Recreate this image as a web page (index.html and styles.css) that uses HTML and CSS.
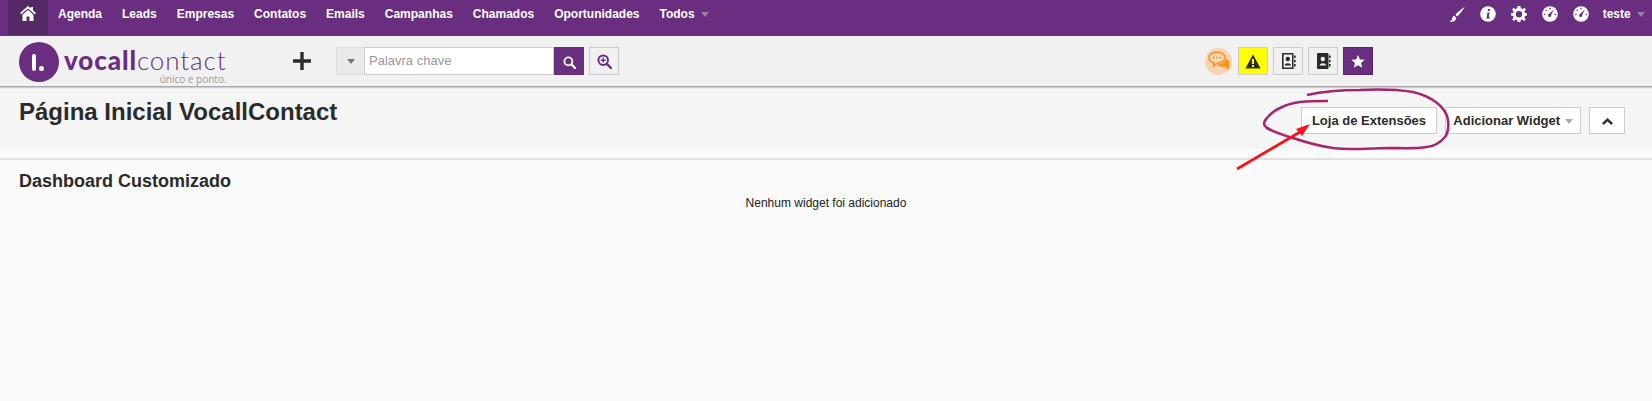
FILE: index.html
```html
<!DOCTYPE html>
<html lang="en">
<head>
  <meta charset="UTF-8" />
  <title>Página Inicial VocallContact</title>
  <link rel="stylesheet" href="styles.css">
</head>
<body>
  <div class="topbar">
    <a class="home-tab">
      <svg width="16" height="15" viewBox="0 0 16 15"><path d="M8 0 L11 2.6 V1 H13 V4.4 L16 7 L14.8 8.2 L8 2.4 L1.2 8.2 L0 7 Z" fill="#fff"/><path d="M8 4 L13.5 8.7 V15 H9.5 V10.5 H6.5 V15 H2.5 V8.7 Z" fill="#fff"/></svg>
    </a>
    <ul class="main-nav">
      <li>Agenda</li>
      <li>Leads</li>
      <li>Empresas</li>
      <li>Contatos</li>
      <li>Emails</li>
      <li>Campanhas</li>
      <li>Chamados</li>
      <li>Oportunidades</li>
      <li>Todos <span class="caret"></span></li>
    </ul>
    <div class="top-tools">
      <svg class="tool" width="16" height="17" viewBox="0 0 17 17"><path d="M16.5 0.5 C13 2.5 9 6 6.8 9 L8.5 10.6 C11.5 8 15 4 16.5 0.5 Z" fill="#fff"/><path d="M5.8 10 C3.5 10 3.6 12.5 3 14 C2.6 15 1.5 15.5 0.5 15.6 C3 17 7.5 16.5 7.6 12 Z" fill="#fff"/></svg>
      <svg class="tool" width="16" height="16" viewBox="0 0 16 16"><circle cx="8" cy="8" r="7.8" fill="#fff"/><path d="M8 3 H10.2 L9.8 5 H7.6 Z M7.3 6.4 H9.6 L8.8 10.8 L9.8 10.8 L9.5 12.4 H6.3 L6.6 10.8 H7 Z" fill="#692e80"/></svg>
      <svg class="tool" width="16" height="16" viewBox="0 0 16 16"><path d="M6.6 0 H9.4 L9.8 2.2 L11.6 3 L13.5 1.8 L15 3.7 L13.4 5.3 L14 7 L16 7.2 V9.6 L14 9.9 L13.4 11.5 L14.8 13.2 L13 15 L11.3 13.5 L9.7 14.1 L9.4 16 H6.6 L6.3 14.1 L4.7 13.5 L3 15 L1.2 13.2 L2.6 11.5 L2 9.9 L0 9.6 V7.2 L2 7 L2.6 5.3 L1 3.7 L2.5 1.8 L4.4 3 L6.2 2.2 Z M8 5 A3.2 3.2 0 1 0 8 11.4 A3.2 3.2 0 1 0 8 5 Z" fill="#fff" fill-rule="evenodd"/></svg>
      <svg class="tool" width="16" height="16" viewBox="0 0 16 16"><circle cx="8" cy="8" r="7.8" fill="#fff"/><path d="M11.8 3.6 L9.2 9 A1.6 1.6 0 1 1 7 8 Z" fill="#692e80"/><circle cx="2.8" cy="8.5" r="0.8" fill="#692e80"/><circle cx="4.2" cy="4.2" r="0.8" fill="#692e80"/><circle cx="8" cy="2.6" r="0.8" fill="#692e80"/><circle cx="13.2" cy="8.5" r="0.8" fill="#692e80"/></svg>
      <svg class="tool last" width="16" height="16" viewBox="0 0 16 16"><circle cx="8" cy="8" r="7.8" fill="#fff"/><path d="M11.8 3.6 L9.2 9 A1.6 1.6 0 1 1 7 8 Z" fill="#692e80"/><circle cx="2.8" cy="8.5" r="0.8" fill="#692e80"/><circle cx="4.2" cy="4.2" r="0.8" fill="#692e80"/><circle cx="8" cy="2.6" r="0.8" fill="#692e80"/><circle cx="13.2" cy="8.5" r="0.8" fill="#692e80"/></svg>
      <span class="user">teste <span class="caret"></span></span>
    </div>
  </div>

  <div class="subbar">
    <div class="logo">
      <div class="logo-mark"><span class="logo-i"></span><span class="logo-dot"></span></div>
      <div class="logo-text">
        <div class="logo-name"><b>vocall</b>contact</div>
        <div class="logo-tag">único e ponto.</div>
      </div>
    </div>
    <svg class="plus" width="20" height="20" viewBox="0 0 20 20"><path d="M8.3 1 H11.7 V8.3 H19 V11.7 H11.7 V19 H8.3 V11.7 H1 V8.3 H8.3 Z" fill="#2b2b2b"/></svg>
    <div class="search">
      <div class="search-select"><span class="caret dark"></span></div>
      <div class="search-input">Palavra chave</div>
      <button class="search-btn">
        <svg width="13" height="13" viewBox="0 0 14 14"><circle cx="5.8" cy="5.8" r="4.3" fill="none" stroke="#fff" stroke-width="2"/><path d="M9 9 L13 13" stroke="#fff" stroke-width="2.4" stroke-linecap="round"/></svg>
      </button>
      <button class="icon-btn search-adv">
        <svg width="15" height="15" viewBox="0 0 15 15"><circle cx="6.2" cy="6.2" r="4.8" fill="none" stroke="#692e80" stroke-width="2"/><path d="M9.8 9.8 L14 14" stroke="#692e80" stroke-width="2.4" stroke-linecap="round"/><path d="M3.8 6.2 H8.6 M6.2 3.8 V8.6" stroke="#692e80" stroke-width="1.4"/></svg>
      </button>
    </div>
    <div class="quick">
      <div class="chat-badge">
        <svg width="22" height="20" viewBox="0 0 22 20"><path d="M9 1 C13.5 1 17 3.4 17 6.6 C17 9.8 13.5 12.2 9 12.2 L5.5 15 L6 11.8 C3 11 1 9 1 6.6 C1 3.4 4.5 1 9 1 Z" fill="none" stroke="#f7931e" stroke-width="1.5"/><circle cx="5.6" cy="6.6" r="1" fill="#f7931e"/><circle cx="9" cy="6.6" r="1" fill="#f7931e"/><circle cx="12.4" cy="6.6" r="1" fill="#f7931e"/><path d="M18 7 C21 9 22 12 21 14.5 L21.5 19 L16.5 15.8 C13 16 10.5 15 9 13.4 C13 13.4 18 11.5 18 7 Z" fill="#f7931e"/></svg>
      </div>
      <button class="icon-btn alert">
        <svg width="16" height="15" viewBox="0 0 16 15"><path d="M8 0.5 L15.6 14.5 H0.4 Z" fill="#2b2b2b"/><rect x="7" y="5" width="2" height="5" fill="#ffff00"/><rect x="7" y="11" width="2" height="2" fill="#ffff00"/></svg>
      </button>
      <button class="icon-btn">
        <svg width="15" height="16" viewBox="0 0 15 16"><path d="M1 0 H12.5 V16 H1 Z M2.6 1.5 V14.5 H11 V1.5 Z" fill="#2b2b2b" fill-rule="evenodd"/><path d="M13 2.5 H14.6 V5 H13 Z M13 6.8 H14.6 V9.2 H13 Z M13 11 H14.6 V13.5 H13 Z" fill="#2b2b2b"/><circle cx="6.8" cy="6" r="2.2" fill="#2b2b2b"/><path d="M3.6 12.5 C3.6 9.5 10 9.5 10 12.5 Z" fill="#2b2b2b"/></svg>
      </button>
      <button class="icon-btn">
        <svg width="15" height="16" viewBox="0 0 15 16"><rect x="1" y="0" width="11.5" height="16" rx="1" fill="#2b2b2b"/><path d="M13 2.5 H14.6 V5 H13 Z M13 6.8 H14.6 V9.2 H13 Z M13 11 H14.6 V13.5 H13 Z" fill="#2b2b2b"/><circle cx="6.8" cy="6" r="2.2" fill="#f1f1f1"/><path d="M3.6 12.5 C3.6 9.5 10 9.5 10 12.5 Z" fill="#f1f1f1"/></svg>
      </button>
      <button class="icon-btn star">
        <svg width="14" height="13" viewBox="0 0 14 13"><path d="M7 0 L8.9 4.4 L13.7 4.8 L10 8 L11.2 12.7 L7 10.2 L2.8 12.7 L4 8 L0.3 4.8 L5.1 4.4 Z" fill="#fff"/></svg>
      </button>
    </div>
  </div>

  <div class="page-head">
    <h1>Página Inicial VocallContact</h1>
    <div class="head-actions">
      <button class="btn btn-store">Loja de Extensões</button>
      <button class="btn btn-widget">Adicionar Widget <span class="caret grey"></span></button>
      <button class="btn btn-up">
        <svg width="11" height="7" viewBox="0 0 14 9"><path d="M7 0 L14 6.5 L11.8 9 L7 4.5 L2.2 9 L0 6.5 Z" fill="#333"/></svg>
      </button>
    </div>
  </div>

  <div class="content">
    <h2>Dashboard Customizado</h2>
    <p class="empty">Nenhum widget foi adicionado</p>
  </div>

  <svg class="markup" width="1652" height="401" viewBox="0 0 1652 401">
    <path d="M1307 95 C1325 91 1345 90 1360 90 C1380 89 1400 90 1413 92 C1430 96 1446 106 1448 120 C1449 128 1448 133 1445 137 C1440 143 1435 146 1427 147 C1415 149 1400 148 1387 148 C1365 149 1350 150 1333 148 C1318 146 1305 142 1293 138 C1283 135 1274 132 1267 128 C1263 125 1263 122 1267 118 C1271 113 1275 110 1280 108 C1287 104 1293 103 1300 102 C1310 101 1320 101 1328 101" fill="none" stroke="#a8246f" stroke-width="2.6"/>
    <path d="M1237 169 L1300 132" stroke="#f5141c" stroke-width="2.8" fill="none"/>
    <path d="M1310 124 L1302 136 L1296 129 Z" fill="#f5141c"/>
  </svg>
</body>
</html>
```

FILE: styles.css
```css
* {
  box-sizing: border-box;
}

body {
  margin: 0;
  font-family: "Liberation Sans", Arial, sans-serif;
  font-size: 12px;
  color: #2b2b2b;
  background: #fafafa;
  position: relative;
  height: 401px;
  overflow: hidden;
}

button {
  font-family: inherit;
  cursor: pointer;
}

.caret {
  display: inline-block;
  width: 0;
  height: 0;
  border-left: 4px solid transparent;
  border-right: 4px solid transparent;
  border-top: 5px solid #9b7fa8;
  margin-left: 3px;
  vertical-align: 1px;
}

.caret.dark {
  border-top-color: #777;
  margin: 0;
}

.caret.grey {
  border-top-color: #aaa;
  margin-left: 1px;
}

/* top purple bar */
.topbar {
  height: 36px;
  background: #692e80;
  display: flex;
  padding-left: 8px;
  color: #fff;
  font-weight: bold;
  font-size: 12px;
}

.home-tab {
  width: 40px;
  height: 35px;
  background: #532864;
  display: flex;
  justify-content: center;
  padding-top: 6px;
}

.main-nav {
  list-style: none;
  margin: 0;
  padding: 7px 0 0 10px;
  display: flex;
  gap: 20px;
}

.top-tools {
  margin-left: auto;
  display: flex;
  align-items: center;
  height: 28px;
  padding-right: 7px;
}

.tool {
  margin-right: 15px;
}

.tool.last {
  margin-right: 14px;
}

/* logo + search bar */
.subbar {
  height: 51px;
  background: #f1f1f1;
  border-bottom: 1px solid #aaa;
  box-shadow: 0 1px 1px #ccc;
  display: flex;
  align-items: center;
  padding-left: 19px;
  position: relative;
}

.logo {
  display: flex;
  width: 273px;
  height: 40px;
  margin-top: 1px;
}

.logo-mark {
  width: 40px;
  height: 40px;
  border-radius: 50%;
  background: #692e80;
  display: flex;
  align-items: flex-end;
  padding: 0 0 11px 13px;
  gap: 3px;
}

.logo-i {
  width: 4px;
  height: 17px;
  border-radius: 2px;
  background: #fff;
}

.logo-dot {
  width: 5px;
  height: 5px;
  border-radius: 50%;
  background: #fff;
}

.logo-text {
  margin-left: 5px;
  padding-top: 4px;
  color: #692e80;
}

.logo-name {
  font-family: Lato, sans-serif;
  font-weight: 300;
  font-size: 26px;
  line-height: 28px;
  letter-spacing: 0.9px;
  white-space: nowrap;
}

.logo-name b {
  font-weight: 900;
}

.logo-tag {
  text-align: right;
  font-family: "Open Sans", sans-serif;
  font-size: 10px;
  line-height: 10px;
  color: #999;
}

.search {
  display: flex;
  align-items: stretch;
  height: 28px;
  margin-left: 24px;
}

.search-select {
  width: 28px;
  background: #eaeaea;
  border: 1px solid #ddd;
  border-right: 0;
  display: flex;
  align-items: center;
  justify-content: center;
}

.search-input {
  width: 190px;
  background: #fff;
  border: 1px solid #ccc;
  padding: 0 4px;
  line-height: 25px;
  font-size: 13px;
  color: #999;
}

.search-btn {
  width: 30px;
  border: 0;
  padding: 3px 0 0;
  background: #692e80;
  display: flex;
  align-items: center;
  justify-content: center;
}

.icon-btn {
  width: 30px;
  height: 28px;
  padding: 0;
  background: #f1f1f1;
  border: 1px solid #ccc;
  display: flex;
  align-items: center;
  justify-content: center;
}

.search-adv {
  margin-left: 5px;
}

.quick {
  margin-left: 586px;
  display: flex;
  align-items: center;
  gap: 5px;
}

.chat-badge {
  width: 27px;
  height: 27px;
  border-radius: 50%;
  background: #f6d5b0;
  display: flex;
  align-items: center;
  justify-content: center;
  margin-right: 1px;
}

.icon-btn.alert {
  background: #ffff00;
}

.icon-btn.star {
  background: #692e80;
  border-color: #55246a;
}

/* page title */
.page-head {
  height: 61px;
  background: #f5f5f5;
  display: flex;
  justify-content: space-between;
  padding: 11px 27px 0 19px;
}

h1 {
  margin: 0;
  font-size: 24px;
  line-height: 28px;
  color: #2b2b2b;
}

.head-actions {
  display: flex;
  gap: 8px;
  padding-top: 9px;
  height: 36px;
}

.btn {
  height: 27px;
  background: #fff;
  border: 1px solid #ccc;
  font-size: 13px;
  font-weight: bold;
  color: #2b2b2b;
  padding: 0;
}

.btn-store,
.btn-widget {
  width: 136px;
}

.btn-up {
  width: 36px;
}

.content {
  margin-top: 10px;
  border-top: 2px solid #e0e0e0;
  padding: 11px 19px 0;
}

h2 {
  margin: 0;
  font-size: 18px;
  line-height: 20px;
  color: #2b2b2b;
}

.empty {
  margin: 5px 0 0;
  text-align: center;
  font-size: 12px;
  line-height: 14px;
  color: #222;
}

/* hand-drawn markup over the screenshot */
.markup {
  position: absolute;
  left: 0;
  top: 0;
  pointer-events: none;
}
```
